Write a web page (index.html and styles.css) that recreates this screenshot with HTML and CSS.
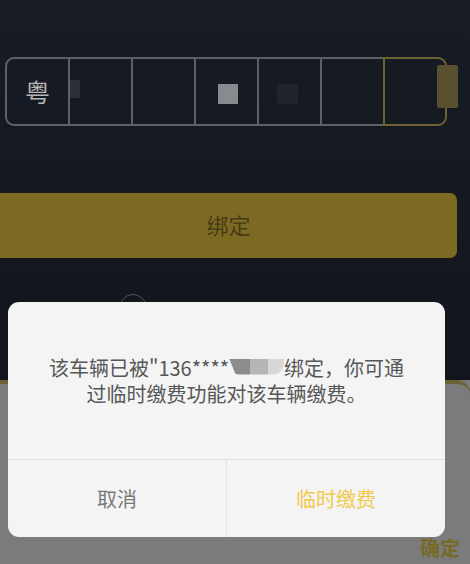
FILE: index.html
```html
<!DOCTYPE html>
<html lang="zh-CN">
<head>
<meta charset="utf-8">
<link rel="stylesheet" href="styles.css">
</head>
<body>
<div class="screen">
  <section class="top">
    <div class="plate">
      <div class="cell first"><span class="prov">粤</span></div>
      <div class="cell"><span class="mark m-left"></span></div>
      <div class="cell"></div>
      <div class="cell"><span class="mark m-light"></span></div>
      <div class="cell"><span class="mark m-dim"></span></div>
      <div class="cell"><span class="mark m-faint"></span></div>
      <div class="cell last"></div>
      <span class="cursor"></span>
    </div>
    <div class="bind-btn">绑定</div>
    <span class="ring"></span>
  </section>
  <section class="sheet">
    <span class="ok">确定</span>
  </section>

  <div class="dialog">
    <div class="msg">
      <p>该车辆已被"136****<span class="blur"></span>绑定，你可通<br>过临时缴费功能对该车辆缴费。</p>
    </div>
    <div class="actions">
      <div class="act cancel">取消</div>
      <div class="act pay">临时缴费</div>
    </div>
  </div>
</div>
</body>
</html>
```

FILE: styles.css
```css
html, body {
  margin: 0;
  padding: 0;
}
body {
  font-family: "Noto Sans CJK SC", "Noto Sans", "Liberation Sans", sans-serif;
  background: #7b7b7b;
}
.screen {
  position: relative;
  width: 470px;
  height: 564px;
  overflow: hidden;
  display: flex;
  flex-direction: column;
}
.top {
  position: relative;
  height: 380px;
  background: linear-gradient(#171c25, #12151b);
  padding-top: 57px;
  box-sizing: border-box;
}
.plate {
  position: relative;
  margin-left: 5px;
  width: 442px;
  height: 69px;
  display: flex;
}
.cell {
  position: relative;
  width: 63px;
  height: 69px;
  box-sizing: border-box;
  border-top: 2px solid #5d6066;
  border-bottom: 2px solid #5d6066;
  border-left: 2px solid #5d6066;
}
.cell.first {
  border-radius: 9px 0 0 9px;
  display: flex;
  align-items: center;
  justify-content: center;
}
.cell.last {
  width: 64px;
  border: 2px solid #6e6330;
  border-radius: 0 9px 9px 0;
}
.prov {
  color: #b4b4b4;
  font-size: 25px;
  line-height: 1;
}
.mark {
  position: absolute;
  display: block;
}
.m-left {
  left: 0;
  top: 21px;
  width: 10px;
  height: 18px;
  background: #2c3038;
}
.m-light {
  left: 22px;
  top: 25px;
  width: 20px;
  height: 20px;
  background: #878a8e;
}
.m-dim {
  left: 18px;
  top: 25px;
  width: 21px;
  height: 20px;
  background: #1f232b;
}
.m-faint {
  left: 18px;
  top: 27px;
  width: 20px;
  height: 18px;
  background: #171b22;
}
.cursor {
  position: absolute;
  left: 432px;
  top: 8px;
  width: 21px;
  height: 43px;
  background: #595030;
  border-radius: 2px;
}
.bind-btn {
  margin-top: 67px;
  width: 457px;
  height: 65px;
  background: #7c6a22;
  border-radius: 0 7px 7px 0;
  display: flex;
  align-items: center;
  justify-content: center;
  color: #483c16;
  font-size: 22px;
  line-height: 1;
  padding-bottom: 3px;
  box-sizing: border-box;
}
.ring {
  position: absolute;
  left: 119px;
  top: 294px;
  width: 28px;
  height: 28px;
  box-sizing: border-box;
  border: 1.5px solid #50535a;
  border-radius: 50%;
}
.sheet {
  flex: 1;
  background: #7b7b7b;
  border-top: 4px solid #6d6232;
  border-radius: 0 14px 0 0;
  display: flex;
  justify-content: flex-end;
  align-items: flex-end;
  padding: 0 10px 4px 0;
}
.ok {
  color: #776a26;
  font-size: 20px;
  font-weight: 700;
  line-height: 24px;
}
.dialog {
  position: absolute;
  left: 8px;
  top: 302px;
  width: 437px;
  height: 235px;
  background: #f4f4f4;
  border-radius: 11px;
  display: flex;
  flex-direction: column;
  overflow: hidden;
}
.msg {
  height: 158px;
  display: flex;
  align-items: center;
  justify-content: center;
  border-bottom: 1px solid #e2e2e2;
  box-sizing: border-box;
}
.msg p {
  margin: 0;
  text-align: center;
  font-size: 20px;
  line-height: 26px;
  color: #575757;
}
.blur {
  display: inline-block;
  width: 55px;
  height: 16px;
  vertical-align: 1px;
  background: linear-gradient(90deg, #8c8c8c 0 38%, #b6b6b6 38% 70%, #d8d8d8 70% 100%);
  border-radius: 0 0 12px 12px;
  clip-path: polygon(0 0, 100% 0, 100% 100%, 12% 100%);
}
.actions {
  flex: 1;
  display: flex;
}
.act {
  flex: 1;
  display: flex;
  align-items: center;
  justify-content: center;
  font-size: 20px;
}
.cancel {
  color: #787878;
  border-right: 1px solid #e2e2e2;
}
.pay {
  color: #f1c94a;
}
```
